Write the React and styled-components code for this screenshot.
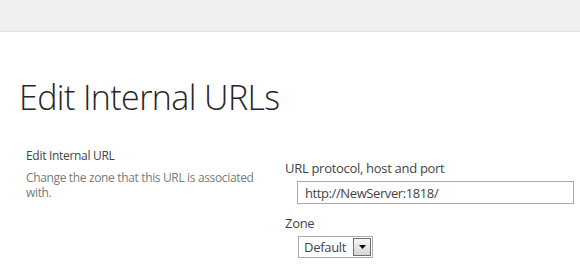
import React from 'react';
import styled, { createGlobalStyle } from 'styled-components';

const GlobalStyle = createGlobalStyle`
  html, body {
    margin: 0;
    padding: 0;
    background: #fff;
    font-family: "Open Sans", "Noto Sans", sans-serif;
  }
`;

const App = () => {
  return (
    <Page>
      <GlobalStyle />
      <TopBar />
      <Main>
        <PageTitle>Edit Internal URLs</PageTitle>
        <Section>
          <SectionInfo>
            <SectionTitle>Edit Internal URL</SectionTitle>
            <SectionDesc>Change the zone that this URL is associated with.</SectionDesc>
          </SectionInfo>
          <Fields>
            <Field>
              <FieldLabel>URL protocol, host and port</FieldLabel>
              <TextInput defaultValue="http://NewServer:1818/" />
            </Field>
            <Field>
              <FieldLabel>Zone</FieldLabel>
              <Select>
                <SelectValue>Default</SelectValue>
                <SelectButton>
                  <svg width="7" height="4" viewBox="0 0 7 4">
                    <polygon points="0,0 7,0 3.5,4" fill="#000" />
                  </svg>
                </SelectButton>
              </Select>
            </Field>
          </Fields>
        </Section>
      </Main>
    </Page>
  );
};

const Page = styled.div`
  width: 580px;
  height: 274px;
  overflow: hidden;
`;

const TopBar = styled.div`
  height: 31px;
  background: #f0f0f0;
  border-bottom: 1px solid #e3e3e3;
`;

const Main = styled.div`
  padding: 43px 0 0 19px;
`;

const PageTitle = styled.h1`
  margin: 0;
  font-weight: 300;
  font-size: 34px;
  line-height: 44px;
  color: #262626;
  letter-spacing: -0.6px;
`;

const Section = styled.div`
  display: flex;
  margin-top: 27px;
  padding-left: 7px;
`;

const SectionInfo = styled.div`
  width: 259px;
  padding-top: 2px;
`;

const SectionTitle = styled.div`
  font-size: 12px;
  line-height: 16px;
  color: #444;
  letter-spacing: -0.3px;
`;

const SectionDesc = styled.div`
  margin-top: 6px;
  font-size: 12px;
  line-height: 15px;
  color: #7a7a7a;
  letter-spacing: -0.35px;
  width: 234px;
`;

const Fields = styled.div`
  display: flex;
  flex-direction: column;
  gap: 10px;
  padding-top: 13px;
`;

const Field = styled.div`
  display: flex;
  flex-direction: column;
`;

const FieldLabel = styled.div`
  font-size: 13px;
  line-height: 18px;
  color: #444;
  letter-spacing: -0.3px;
  margin-bottom: 4px;
`;

const TextInput = styled.input`
  box-sizing: border-box;
  margin-left: 12px;
  width: 277px;
  height: 23px;
  border: 1px solid #ababab;
  padding: 0 7px;
  font-family: "Open Sans", "Noto Sans", sans-serif;
  font-size: 13px;
  letter-spacing: -0.4px;
  color: #444;
  outline: none;
`;

const Select = styled.div`
  box-sizing: border-box;
  margin-left: 13px;
  width: 75px;
  height: 22px;
  border: 1px solid #ababab;
  display: flex;
  align-items: center;
  justify-content: space-between;
  padding: 0 1px 0 5px;
`;

const SelectValue = styled.span`
  font-size: 13px;
  color: #444;
  letter-spacing: -0.3px;
`;

const SelectButton = styled.span`
  box-sizing: border-box;
  width: 18px;
  height: 18px;
  border: 1px solid #6f6f6f;
  background: linear-gradient(#f6f6f6, #d6d6d6);
  display: flex;
  align-items: center;
  justify-content: center;
`;

export default App;
